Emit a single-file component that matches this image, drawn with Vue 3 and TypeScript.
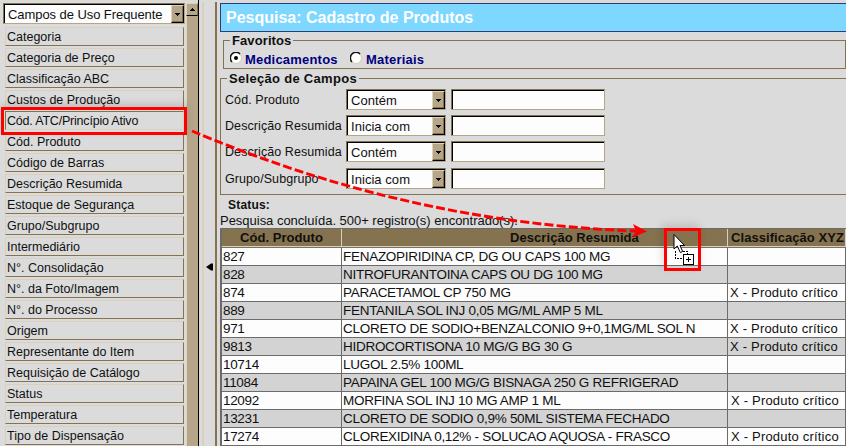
<script setup lang="ts">
interface Criterion { label: string; op: string }
interface Product { code: string; name: string; cls: string; shift?: boolean }

const fields: string[] = [
  'Categoria', 'Categoria de Preço', 'Classificação ABC', 'Custos de Produção',
  'Cód. ATC/Princípio Ativo', 'Cód. Produto', 'Código de Barras', 'Descrição Resumida',
  'Estoque de Segurança', 'Grupo/Subgrupo', 'Intermediário', 'N°. Consolidação',
  'N°. da Foto/Imagem', 'N°. do Processo', 'Origem', 'Representante do Item',
  'Requisição de Catálogo', 'Status', 'Temperatura', 'Tipo de Dispensação',
]
const criteria: Criterion[] = [
  { label: 'Cód. Produto', op: 'Contém' },
  { label: 'Descrição Resumida', op: 'Inicia com' },
  { label: 'Descrição Resumida', op: 'Contém' },
  { label: 'Grupo/Subgrupo', op: 'Inicia com' },
]
const critical = 'X - Produto crítico'
const products: Product[] = [
  { code: '827', name: 'FENAZOPIRIDINA CP, DG OU CAPS 100 MG', cls: '' },
  { code: '828', name: 'NITROFURANTOINA CAPS OU DG 100 MG', cls: '' },
  { code: '874', name: 'PARACETAMOL CP 750 MG', cls: critical },
  { code: '889', name: 'FENTANILA SOL INJ 0,05 MG/ML AMP 5 ML', cls: '' },
  { code: '971', name: 'CLORETO DE SODIO+BENZALCONIO 9+0,1MG/ML SOL N', cls: critical },
  { code: '9813', name: 'HIDROCORTISONA 10 MG/G BG 30 G', cls: critical },
  { code: '10714', name: 'LUGOL 2.5% 100ML', cls: '' },
  { code: '11084', name: 'PAPAINA GEL 100 MG/G BISNAGA 250 G REFRIGERAD', cls: '' },
  { code: '12092', name: 'MORFINA SOL INJ 10 MG AMP 1 ML', cls: critical, shift: true },
  { code: '13231', name: 'CLORETO DE SODIO 0,9% 50ML SISTEMA FECHADO', cls: '' },
  { code: '17274', name: 'CLOREXIDINA 0,12% - SOLUCAO AQUOSA - FRASCO', cls: critical, shift: true },
]
</script>

<template>
  <div class="screen">
    <aside class="side">
      <div class="combo side-combo">
        <span class="combo-text">Campos de Uso Frequente</span>
        <span class="combo-btn"><svg width="5" height="3" shape-rendering="crispEdges"><path d="M0 0h5v1H4v1H3v1H2V2H1V1H0z" /></svg></span>
      </div>
      <div class="field-list">
        <div v-for="(f, i) in fields" :key="f" class="field" :class="{ pressed: i === 4 }">{{ f }}</div>
      </div>
    </aside>
    <div class="scroll">
      <div class="scroll-up"><svg width="5" height="3" shape-rendering="crispEdges"><path d="M2 0h1v1h1v1h1v1H0V2h1V1h1z" /></svg></div>
      <div class="track"></div>
    </div>
    <div class="splitter"><svg width="7" height="8"><path d="M0 4L5 0.5H7V7.5H5z" /></svg></div>

    <main class="main">
      <h1 class="title"><span>Pesquisa: Cadastro de Produtos</span></h1>
      <section class="group fav">
        <span class="legend">Favoritos</span>
        <div class="radios">
          <svg class="radio" width="12" height="12"><circle cx="6" cy="6" r="5.5" fill="#fff" stroke="#d8ccb0" /><path d="M2 10A5.4 5.4 0 0 1 10 2" fill="none" stroke="#111" stroke-width="1.5" /><circle cx="6" cy="6" r="2" /></svg>
          <span class="radio-label first">Medicamentos</span>
          <svg class="radio" width="12" height="12"><circle cx="6" cy="6" r="5.5" fill="#fff" stroke="#d8ccb0" /><path d="M2 10A5.4 5.4 0 0 1 10 2" fill="none" stroke="#111" stroke-width="1.5" /></svg>
          <span class="radio-label">Materiais</span>
        </div>
      </section>
      <section class="group sel">
        <span class="legend">Seleção de Campos</span>
        <div class="criteria">
          <div v-for="(c, i) in criteria" :key="i" class="criterion">
            <label class="crit-label">{{ c.label }}</label>
            <div class="combo crit-combo">
              <span class="combo-text">{{ c.op }}</span>
              <span class="combo-btn"><svg width="5" height="3" shape-rendering="crispEdges"><path d="M0 0h5v1H4v1H3v1H2V2H1V1H0z" /></svg></span>
            </div>
            <div class="input"></div>
          </div>
        </div>
      </section>
      <div class="status">Status:</div>
      <div class="message">Pesquisa concluída. 500+ registro(s) encontrado(s).</div>
      <div class="grid">
        <div class="row head">
          <div class="cell">Cód. Produto</div>
          <div class="cell desc">Descrição Resumida</div>
          <div class="cell xyz">Classificação XYZ</div>
        </div>
        <div v-for="p in products" :key="p.code" class="row">
          <div class="cell code">{{ p.code }}</div>
          <div class="cell">{{ p.name }}</div>
          <div class="cell cls" :class="{ shift: p.shift }">{{ p.cls }}</div>
        </div>
      </div>
    </main>

    <div class="mark mark-source"></div>
    <div class="mark mark-target"></div>
    <svg class="overlay" width="846" height="446">
      <path d="M192 131C290 172 440 224 636 231" fill="none" stroke="#f00" stroke-width="2.9" stroke-dasharray="9 3.2" />
      <path d="M633 224L647 231.5L632 237.5L636 231z" fill="#f00" />
      <path d="M674 234.5V249L677.3 246L680.3 252.500L682.700 251.500L680 245.500H684.500z" fill="#fff" stroke="#000" stroke-width="1" />
      <g shape-rendering="crispEdges">
        <path d="M675.5 251.500V258.500H683M683 251.500H687.500V254" fill="none" stroke="#fff" />
        <path d="M675.5 251V258.500H683M683 251.500H687.500V254" fill="none" stroke="#000" stroke-dasharray="2 1" />
        <rect x="683.5" y="254.500" width="10" height="10" fill="#fff" stroke="#000" />
        <path d="M686 259.500h5M688.500 257v5" stroke="#000" />
      </g>
    </svg>
  </div>
</template>

<style>
body { margin: 0; background: #dbdbdb; overflow: hidden; }
</style>

<style scoped>
* { box-sizing: border-box; }
.screen { position: relative; display: flex; width: 846px; height: 446px; overflow: hidden; background: #dbdbdb; color: #101010; font: 13px/19px "Liberation Sans", Arial, sans-serif; white-space: nowrap; }
.side { width: 186px; flex: none; padding: 3px 0 0 3px; }
.combo { display: flex; height: 21px; background: #fdfdfd; border: 1px solid; border-color: #85724e #b5a68a #b5a68a #85724e; box-shadow: inset 1px 1px #000; padding: 1px 0 0 1px; }
.combo-text { flex: 1; padding-left: 3px; line-height: 19px; }
.combo-btn { width: 13px; flex: none; display: flex; align-items: center; justify-content: center; background: #b5a68a; border: 1px solid; border-color: #ded2b8 #000 #000 #ded2b8; box-shadow: inset -1px -1px #85724e; }
.side-combo { width: 182px; letter-spacing: -.07px; }
.field-list { display: grid; grid-auto-rows: 19px; gap: 2px; margin: 3px 0 0 2px; width: 179px; }
.field { padding-left: 1px; line-height: 18px; font-size: 12.5px; border: 1px solid; border-color: #dbd0bd #85724e #85724e #dbd0bd; }
.field.pressed { border-color: #85724e #dbd0bd #dbd0bd #85724e; letter-spacing: -.2px; }
.scroll { width: 13px; flex: none; padding-top: 3px; display: flex; flex-direction: column; border-right: 1px solid #000; }
.scroll-up { height: 13px; display: flex; align-items: center; justify-content: center; background: #b5a68a; border: 1px solid; border-color: #ded2b8 #85724e #000 #ded2b8; }
.track { flex: 1; border-left: 1px solid #ded2b8; background: #b5a68a; }
.splitter { width: 15px; flex: none; margin: 2px 3px 0 3px; border-left: 2px solid #dbd0bd; border-right: 2px solid #85724e; padding: 261px 0 0 2px; }
.splitter svg { display: block; }
.main { flex: 1; min-width: 0; padding-top: 3px; }
.title { margin: 0; height: 29px; background: #7dd7ff; border: 1px solid #2c3c74; border-right: 0; color: #fff; padding-left: 5px; font: bold 16px/27px "Liberation Sans", Arial, sans-serif; }
.group { position: relative; border: 1px solid #85724e; }
.fav { height: 29px; margin: 8px 0 0 3px; }
.legend { position: absolute; top: -9px; left: 6px; padding: 0 2px; background: #dbdbdb; font-weight: bold; line-height: 18px; letter-spacing: .3px; }
.fav .legend { letter-spacing: .1px; }
.radios { display: flex; align-items: center; padding: 10px 0 0 6px; height: 27px; font-weight: bold; color: #00007f; }
.radio { flex: none; margin-top: -3px; }
.radio-label { margin-left: 4px; letter-spacing: .2px; }
.radio-label.first { width: 104px; margin-left: 3px; margin-right: 1px; }
.sel { height: 117px; margin-top: 9px; border-right: 0; }
.criteria { padding: 10px 0 0 4px; display: grid; grid-template-rows: 26px 26px 27px 21px; }
.criterion { display: grid; grid-template-columns: 121px 100px 154px; column-gap: 0; height: 21px; }
.crit-label { line-height: 23px; font-size: 12.5px; letter-spacing: .08px; }
.criterion .input { margin-left: 5px; width: 154px; height: 21px; background: #fdfdfd; border: 1px solid; border-color: #85724e #b5a68a #b5a68a #85724e; box-shadow: inset 1px 1px #000; }
.crit-combo .combo-text { letter-spacing: .05px; }
.status { height: 17px; padding: 2px 0 0 8px; font-weight: bold; line-height: 16px; font-size: 12px; letter-spacing: .2px; }
.message { height: 16px; line-height: 17px; letter-spacing: -.02px; }
.grid { border-left: 2px solid #6b6b6b; width: 626px; }
.row { display: grid; grid-template-columns: 120px 386px 118px; height: 18px; background: #fdfdfd; font-size: 13.5px; letter-spacing: -.28px; line-height: 17px; }
.row:nth-child(odd) { background: #d3d3d3; }
.cell { border-right: 1px solid #6b6b6b; border-bottom: 1px solid #6b6b6b; padding-left: 1px; overflow: hidden; }
.cell.code { letter-spacing: -.35px; }
.row .cls { font-size: 13px; padding-left: 2px; line-height: 18px; letter-spacing: .2px; }
.row .cls.shift { padding-left: 3px; }
.head.row { height: 20px; background: #85724e; border-top: 1px solid #6b6b6b; border-bottom: 1px solid #85724e; font-weight: bold; font-size: 13px; }
.head .cell { text-align: center; border-bottom: 1px solid #d0d0d0; border-right-color: #d0d0d0; line-height: 18px; letter-spacing: .05px; padding: 0; }
.head .desc { padding-left: 80px; }
.head .xyz { padding-left: 2px; }
.mark { position: absolute; border: 3px solid #f00; box-shadow: 0 -3px 7px #0002; }
.mark-source { left: 1px; top: 107px; width: 186px; height: 28px; }
.mark-target { left: 664px; top: 228px; width: 37px; height: 43px; box-shadow: -2px -4px 8px #0002; }
.overlay { position: absolute; left: 0; top: 0; }
</style>
